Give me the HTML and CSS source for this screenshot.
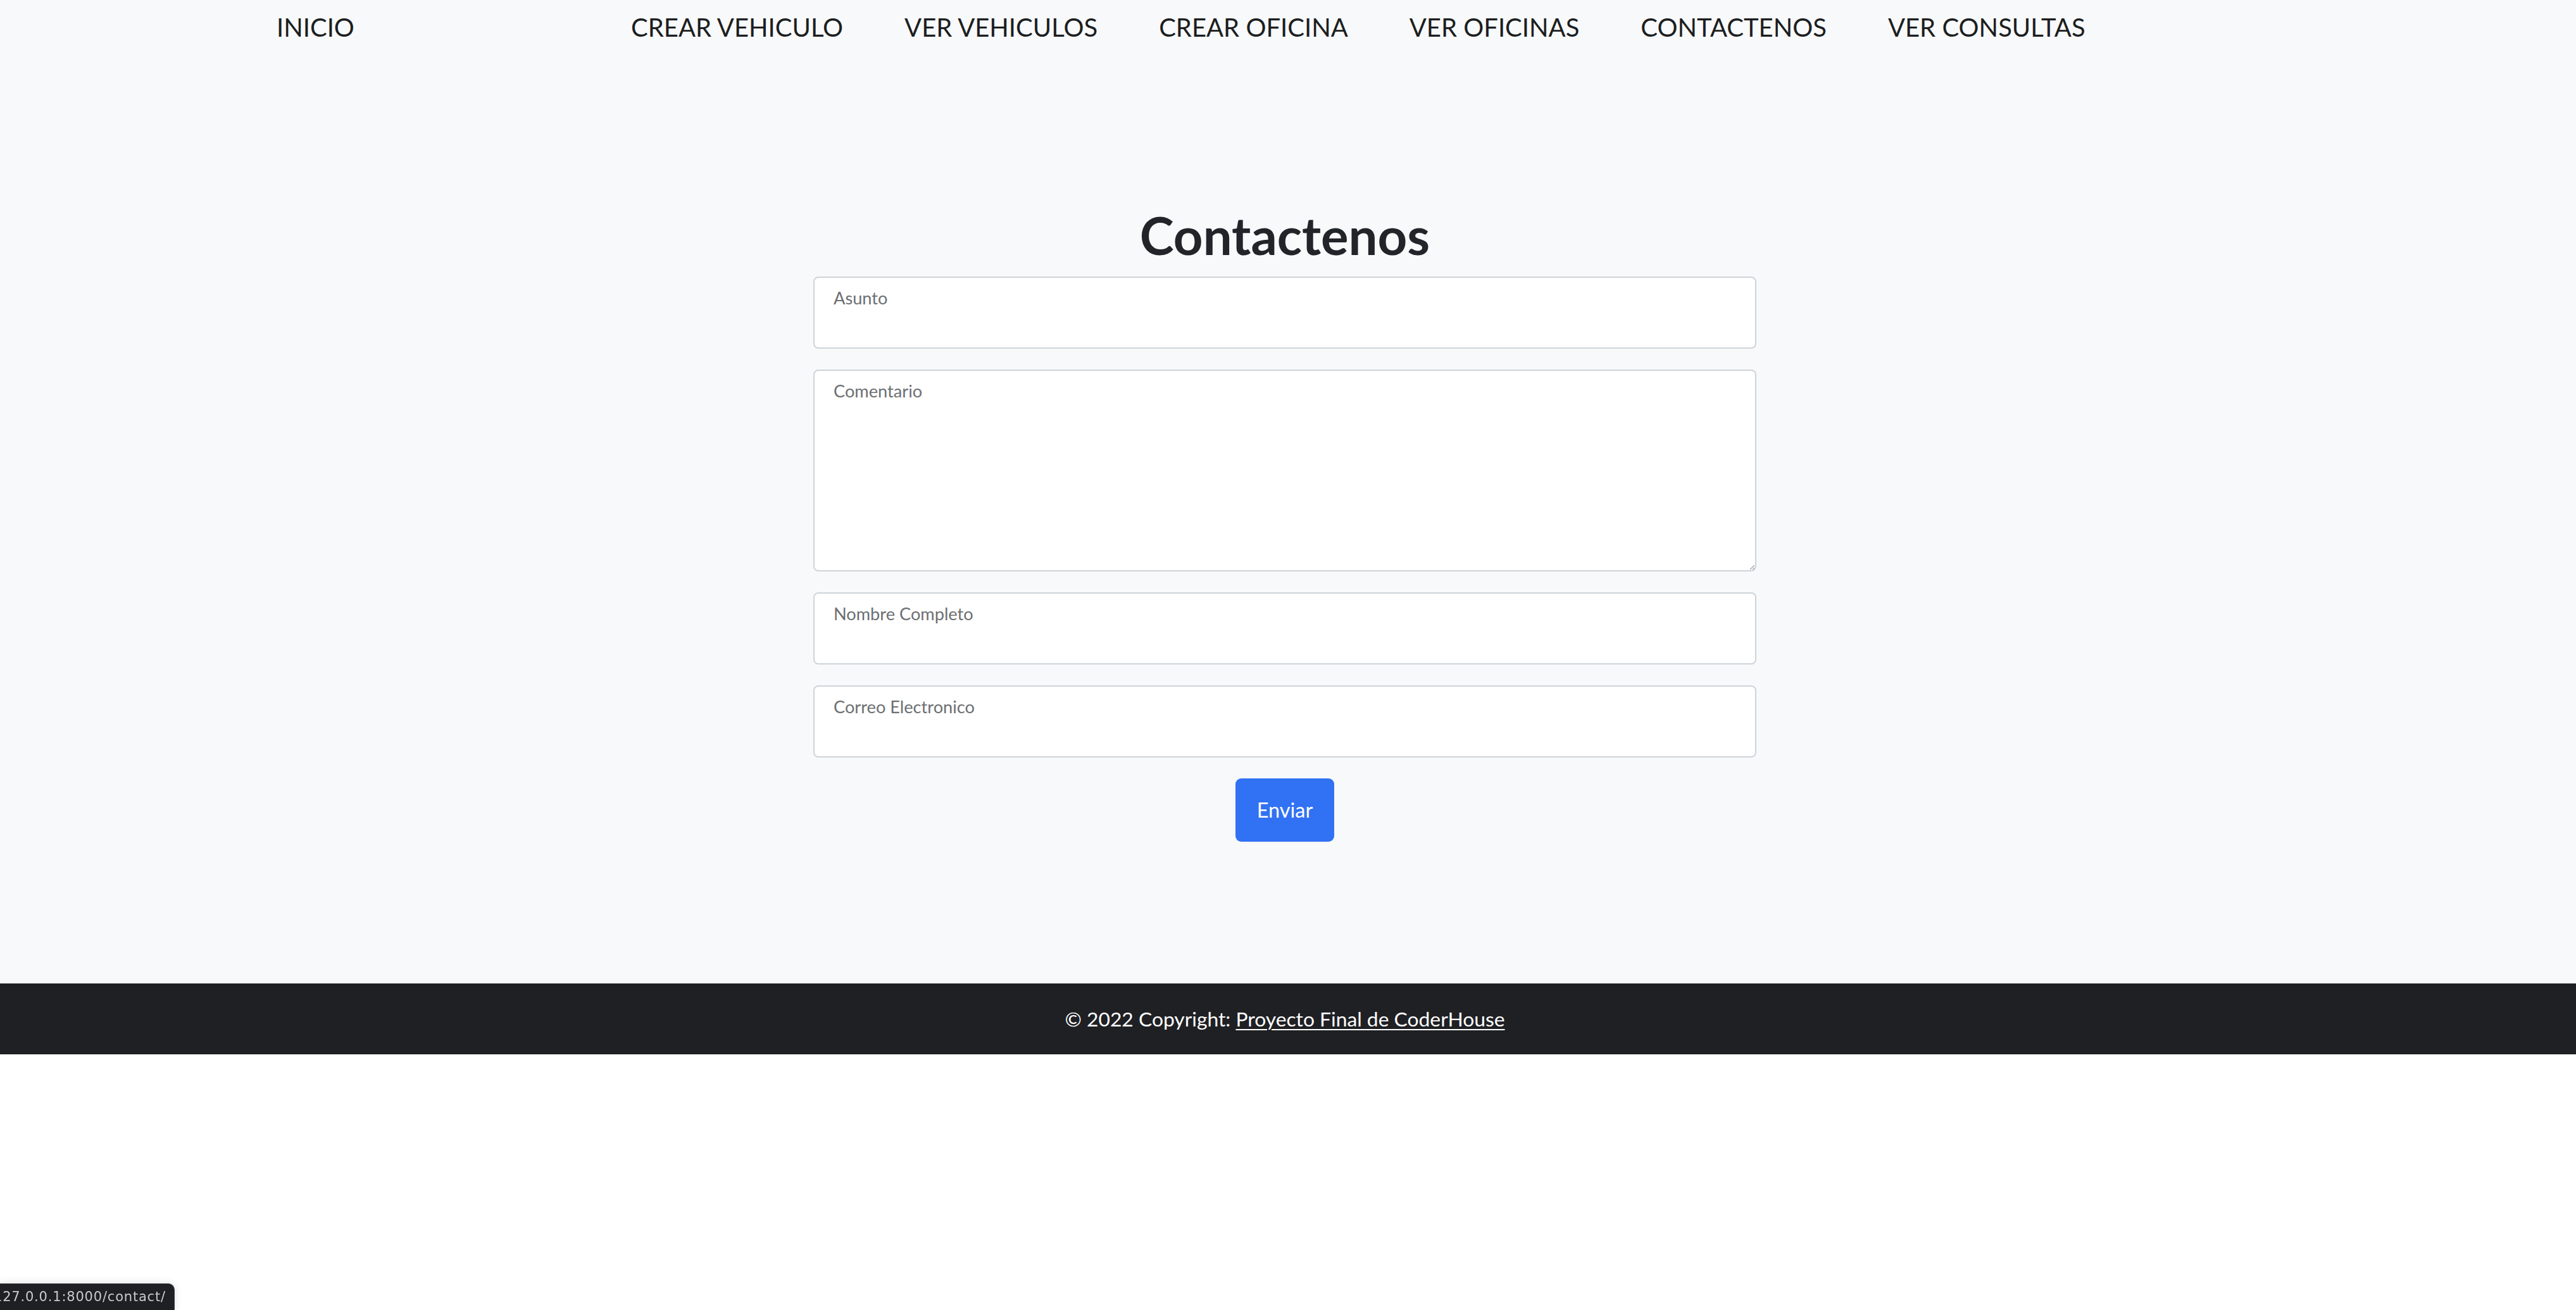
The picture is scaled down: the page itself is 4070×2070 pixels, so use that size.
FILE: index.html
```html
<!DOCTYPE html>
<html lang="es">
<head>
<meta charset="utf-8">
<title>Contactenos</title>
<link rel="stylesheet" href="styles.css">
</head>
<body>
<div class="page">
  <header class="topnav">
    <a class="brand" href="#">INICIO</a>
    <nav class="links">
      <a href="#">CREAR VEHICULO</a>
      <a href="#">VER VEHICULOS</a>
      <a href="#">CREAR OFICINA</a>
      <a href="#">VER OFICINAS</a>
      <a href="#">CONTACTENOS</a>
      <a href="#">VER CONSULTAS</a>
    </nav>
  </header>
  <main class="contact">
    <h2 class="title">Contactenos</h2>
    <form class="form">
      <div class="field">
        <input class="control" type="text" id="asunto">
        <label class="label" for="asunto">Asunto</label>
      </div>
      <div class="field">
        <textarea class="control area" id="comentario"></textarea>
        <label class="label" for="comentario">Comentario</label>
      </div>
      <div class="field">
        <input class="control" type="text" id="nombre">
        <label class="label" for="nombre">Nombre Completo</label>
      </div>
      <div class="field">
        <input class="control" type="email" id="correo">
        <label class="label" for="correo">Correo Electronico</label>
      </div>
      <div class="actions">
        <button class="btn" type="button">Enviar</button>
      </div>
    </form>
  </main>
</div>
<footer class="footer">
  <p class="footer-text">© 2022 Copyright: <a href="#">Proyecto Final de CoderHouse</a></p>
</footer>
<div class="status"><span class="status-text">127.0.0.1:8000/contact/</span></div>
</body>
</html>
```
FILE: styles.css
```css
html, body {
  margin: 0;
  padding: 0;
  background: #ffffff;
}

body {
  font-family: Lato, "Noto Sans", sans-serif;
  color: #212529;
}

.page {
  background: #f8f9fa;
}

.topnav {
  display: flex;
  align-items: flex-start;
  height: 80px;
  box-sizing: border-box;
  padding: 13px 0 0 437px;
  font-size: 40px;
  line-height: 1.5;
}

.topnav a {
  color: #1c1e21;
  text-decoration: none;
  white-space: nowrap;
}

.brand {
  width: 560px;
}

.links {
  display: flex;
  gap: 97px;
}

.contact {
  padding: 243px 10px 224px 0;
  display: flex;
  flex-direction: column;
  align-items: center;
}

.title {
  margin: 0 0 16px;
  font-size: 81.5px;
  font-weight: 700;
  line-height: 1.2;
  color: #212529;
}

.form {
  width: 1490px;
  display: flex;
  flex-direction: column;
  gap: 33px;
}

.field {
  position: relative;
}

.control {
  display: block;
  width: 100%;
  height: 114px;
  box-sizing: border-box;
  margin: 0;
  border: 2px solid #ced4da;
  border-radius: 8px;
  background: #ffffff;
  font-family: Lato, sans-serif;
  font-size: 32px;
  padding: 50px 32px 10px;
  outline: none;
}

.area {
  height: 319px;
  resize: vertical;
}

.label {
  position: absolute;
  left: 32px;
  top: 18px;
  font-size: 27.2px;
  line-height: 1.2;
  color: #6c6f72;
  pointer-events: none;
}

.actions {
  display: flex;
  justify-content: center;
}

.btn {
  width: 156px;
  height: 100px;
  border: 0;
  border-radius: 9px;
  background: #3171f3;
  color: #ffffff;
  font-family: Lato, sans-serif;
  font-size: 32.5px;
  padding: 0;
}

.footer {
  background: #1f2024;
  height: 112px;
  display: flex;
  align-items: center;
  justify-content: center;
  padding-right: 10px;
}

.footer-text {
  margin: 0;
  color: #ffffff;
  font-size: 31.8px;
  line-height: 1.2;
}

.footer-text a {
  color: #ffffff;
  text-decoration: underline;
  text-decoration-thickness: 2px;
  text-underline-offset: 4px;
}

.status {
  position: fixed;
  left: -1px;
  bottom: 0;
  width: 277px;
  height: 42px;
  box-sizing: border-box;
  background: #1f2023;
  border: 1px solid #3b3c3f;
  border-bottom: 0;
  border-top-right-radius: 10px;
  box-shadow: 0 0 14px rgba(0, 0, 0, 0.12);
  overflow: hidden;
  white-space: nowrap;
}

.status-text {
  display: block;
  margin-left: -10px;
  padding-top: 8px;
  font-family: "DejaVu Sans", sans-serif;
  font-size: 21px;
  letter-spacing: 0.8px;
  line-height: 1.2;
  color: #c9c9cb;
}
```
